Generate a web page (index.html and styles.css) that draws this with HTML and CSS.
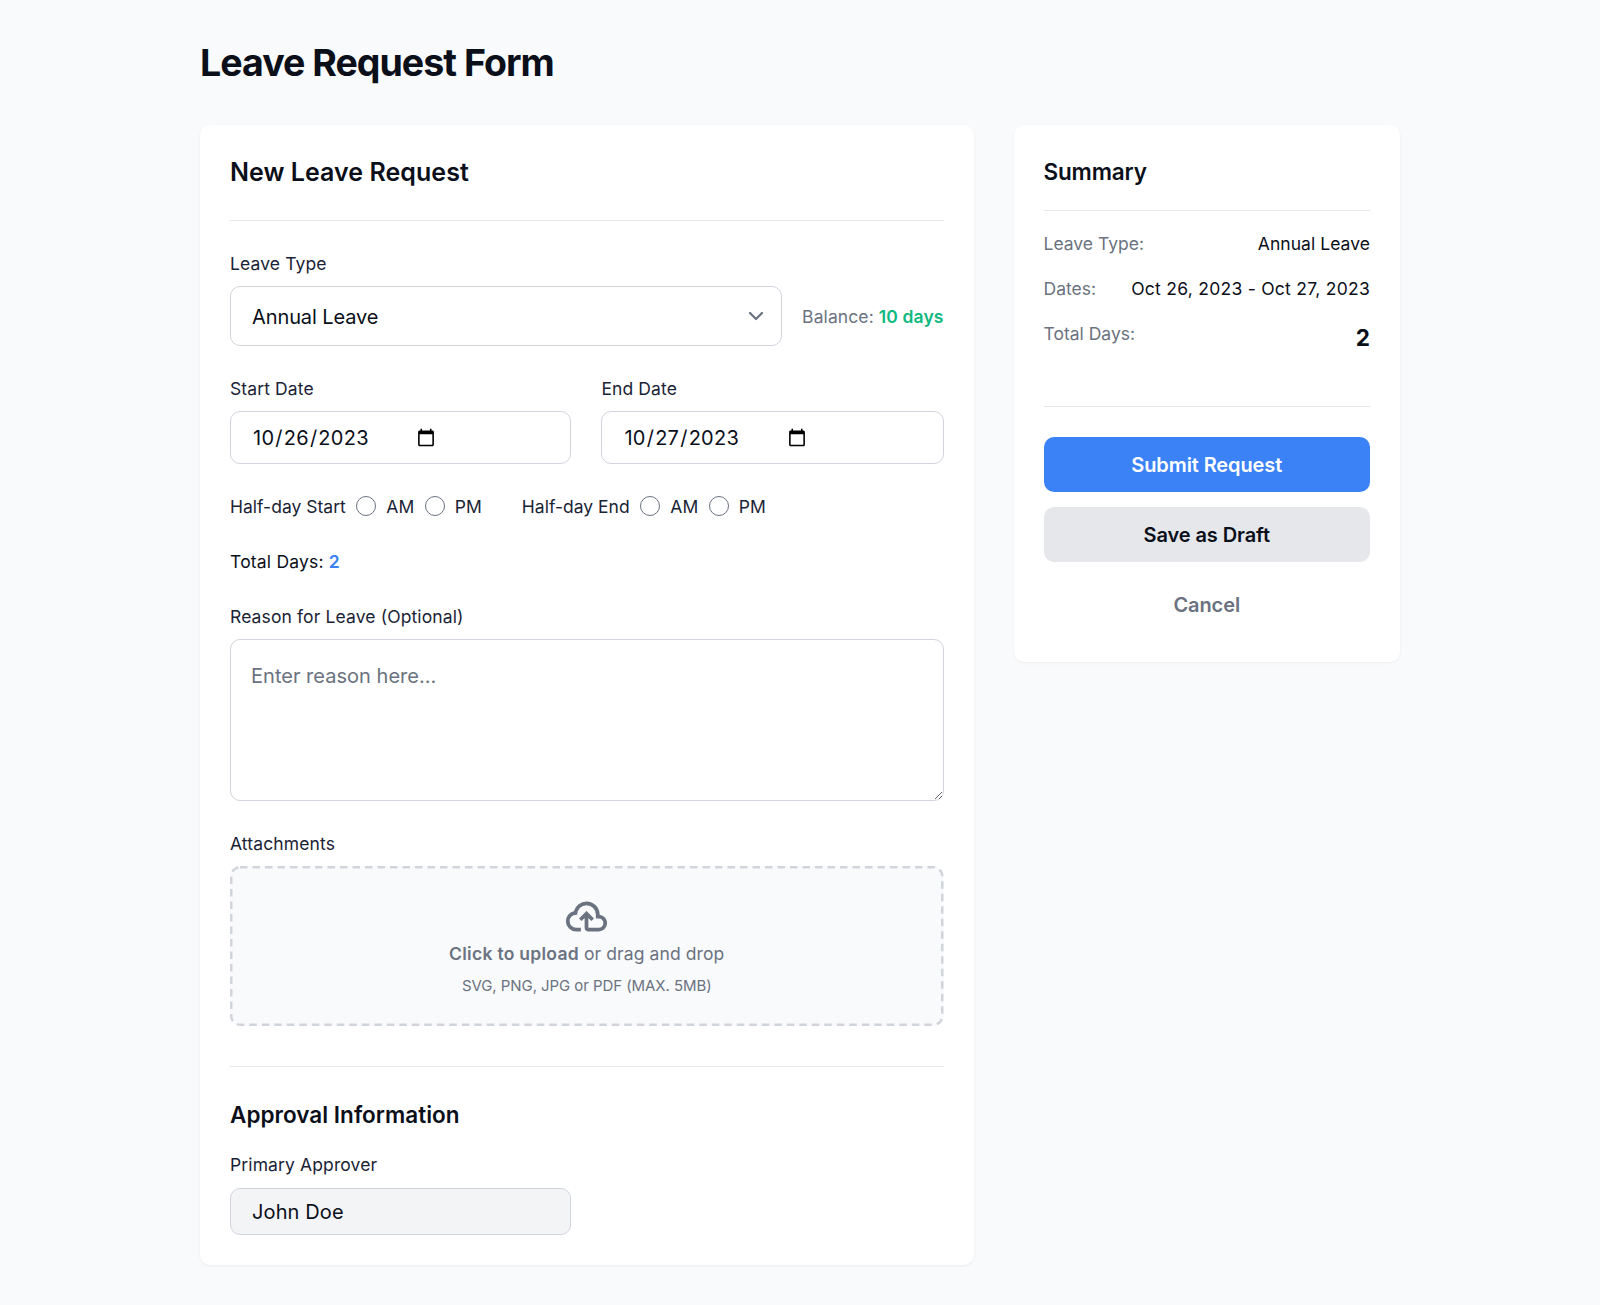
FILE: index.html
```html
<!DOCTYPE html>
<html lang="en">
<head>
<meta charset="utf-8">
<title>Leave Request Form</title>
<link rel="stylesheet" href="styles.css">
</head>
<body>
<div class="page">
  <h1 class="page-title">Leave Request Form</h1>
  <div class="layout">
    <form class="card request">
      <h2 class="request-title">New Leave Request</h2>
      <div class="field">
        <label class="label" for="type">Leave Type</label>
        <div class="type-row">
          <div class="select" id="type">
            <span>Annual Leave</span>
            <svg class="chevron" viewBox="0 0 20 20" fill="none"><path d="M6 8l4 4 4-4" stroke="currentColor" stroke-width="1.5" stroke-linecap="round" stroke-linejoin="round"/></svg>
          </div>
          <span class="balance">Balance: <b class="green">10 days</b></span>
        </div>
      </div>
      <div class="dates">
        <div>
          <label class="label" for="start">Start Date</label>
          <input class="control date" id="start" type="date" value="2023-10-26">
        </div>
        <div>
          <label class="label" for="end">End Date</label>
          <input class="control date" id="end" type="date" value="2023-10-27">
        </div>
      </div>
      <div class="halfdays">
        <div class="halfday"><span>Half-day Start</span><input class="radio" type="radio" name="hs"><span>AM</span><input class="radio" type="radio" name="hs"><span>PM</span></div>
        <div class="halfday"><span>Half-day End</span><input class="radio" type="radio" name="he"><span>AM</span><input class="radio" type="radio" name="he"><span>PM</span></div>
      </div>
      <p class="total">Total Days: <b class="blue">2</b></p>
      <div class="field">
        <label class="label" for="reason">Reason for Leave (Optional)</label>
        <textarea class="control reason" id="reason" placeholder="Enter reason here..."></textarea>
      </div>
      <div class="attachments">
        <span class="label">Attachments</span>
        <div class="dropzone">
          <svg class="dashes"><rect class="dash-line" x="1.25" y="1.25" rx="8.75"/></svg>
          <svg class="cloud" viewBox="0 -960 960 960" fill="currentColor"><path d="M260-160q-91 0-155.500-63T40-377q0-78 47-139t123-78q25-92 100-149t170-57q117 0 198.500 81.500T760-520q69 8 114.500 59.500T920-340q0 75-52.500 127.500T740-160H520q-33 0-56.500-23.500T440-240v-206l-64 62-56-56 160-160 160 160-56 56-64-62v206h220q42 0 71-29t29-71q0-42-29-71t-71-29h-60v-80q0-83-58.500-141.500T480-720q-83 0-141.500 58.500T280-520h-20q-58 0-99 41t-41 99q0 58 41 99t99 41h100v80H260Z"/></svg>
          <p class="drop-main"><b>Click to upload</b> or drag and drop</p>
          <p class="drop-note">SVG, PNG, JPG or PDF (MAX. 5MB)</p>
        </div>
      </div>
      <section class="approval">
        <h3 class="section-title">Approval Information</h3>
        <label class="label" for="approver">Primary Approver</label>
        <input class="control approver" id="approver" type="text" value="John Doe" readonly>
      </section>
    </form>
    <aside class="card summary">
      <h3 class="summary-title">Summary</h3>
      <dl class="rows">
        <div class="row"><dt>Leave Type:</dt><dd>Annual Leave</dd></div>
        <div class="row"><dt>Dates:</dt><dd class="range">Oct 26, 2023 - Oct 27, 2023</dd></div>
        <div class="row"><dt>Total Days:</dt><dd class="big">2</dd></div>
      </dl>
      <div class="actions">
        <button class="button primary" type="button">Submit Request</button>
        <button class="button secondary" type="button">Save as Draft</button>
        <button class="button plain" type="button">Cancel</button>
      </div>
    </aside>
  </div>
</div>
</body>
</html>
```
FILE: styles.css
```css
* { box-sizing: border-box; margin: 0; }
body {
  background: #f9fafc;
  color: #0b0f1a;
  font-family: Inter, "Liberation Sans", sans-serif;
  font-size: 17.5px;
  line-height: 25px;
  letter-spacing: 0.12px;
}
input, textarea, button { font: inherit; color: inherit; letter-spacing: inherit; }
.page { width: 1200px; margin: 0 auto; padding: 38px 0 40px; }
.page-title { font-size: 37.5px; line-height: 50px; font-weight: 700; letter-spacing: -0.97px; margin-bottom: 37px; }
.layout { display: grid; grid-template-columns: 773.5px 386.5px; gap: 40px; align-items: start; }
.card { background: #fff; border-radius: 10px; padding: 30px; box-shadow: 0 1px 3px rgba(0, 0, 0, 0.06); }
.request-title { font-size: 25px; line-height: 35px; font-weight: 600; letter-spacing: 0.04px; padding-bottom: 30px; border-bottom: 1px solid #e5e7eb; margin-bottom: 30px; }
.label { display: block; color: #1a2335; margin-bottom: 10px; }
.type-row { display: flex; align-items: center; gap: 20px; }
.select {
  flex: 1; height: 60px; display: flex; align-items: center; justify-content: space-between;
  padding: 0 10px 0 21px; border: 1px solid #d1d5db; border-radius: 10px; font-size: 20px; letter-spacing: -0.1px;
}
.select span { padding-top: 2px; }
.chevron { width: 30px; height: 30px; color: #6b7280; }
.balance { color: #6b7280; white-space: nowrap; letter-spacing: 0.1px; }
b { font-weight: 600; }
.green { color: #10b981; }
.blue { color: #3b82f6; }
.dates { display: grid; grid-template-columns: 341.4px 1fr; gap: 30px; margin-top: 30px; }
.control { display: block; width: 100%; background: #fff; border: 1px solid #d1d5db; border-radius: 10px; padding: 0 21px; font-size: 20px; outline: none; }
.date { height: 52.5px; padding-top: 2px; letter-spacing: 0.26px; }
.date::-webkit-datetime-edit { flex: none; }
.date::-webkit-calendar-picker-indicator { margin-left: 7px; }
.halfdays { display: flex; gap: 40px; margin-top: 30px; color: #1a2335; letter-spacing: 0.01px; }
.halfday { display: flex; align-items: center; gap: 10.3px; }
.radio { appearance: none; width: 20px; height: 20px; border: 1px solid #6b7280; border-radius: 50%; background: #fff; }
.total { margin: 30px 0; letter-spacing: 0.2px; }
.reason { height: 162px; padding: 21px 20px; line-height: 30px; resize: vertical; letter-spacing: 0.02px; }
.reason::placeholder { color: #6b7280; }
.attachments { margin-top: 30px; }
.dropzone {
  position: relative;
  height: 160px; border-radius: 10px; background: #f9fafc; color: #6b7280;
  display: flex; flex-direction: column; align-items: center; padding-top: 28px;
}
.dashes { position: absolute; inset: 0; width: 100%; height: 100%; }
.dash-line { width: calc(100% - 2.5px); height: calc(100% - 2.5px); fill: none; stroke: #d1d5db; stroke-width: 2.5px; stroke-dasharray: 7.5px 5px; }
.cloud { width: 45px; height: 45px; }
.drop-main { margin-top: 2px; letter-spacing: 0.1px; }
.drop-main b { letter-spacing: 0.28px; }
.drop-note { font-size: 15px; line-height: 20px; margin-top: 10px; letter-spacing: -0.07px; }
.approval { margin-top: 40px; padding-top: 30px; border-top: 1px solid #e5e7eb; }
.section-title, .summary-title { font-size: 22.5px; line-height: 35px; font-weight: 600; letter-spacing: 0.02px; }
.section-title { margin-bottom: 20px; }
.approver { width: 341px; height: 47.5px; margin-top: 11px; padding-top: 2px; background: #f3f4f6; }
.summary-title { line-height: 33px; padding-bottom: 22px; border-bottom: 1px solid #e5e7eb; letter-spacing: -0.15px; }
.rows { display: flex; flex-direction: column; gap: 20px; padding: 20px 0 50px; border-bottom: 1px solid #e5e7eb; }
.row { display: flex; justify-content: space-between; letter-spacing: 0.05px; }
.row dt { color: #6b7280; letter-spacing: 0; }
.row .range { letter-spacing: 0.27px; }
.row .big { font-size: 22.5px; line-height: 33px; padding-bottom: 2px; font-weight: 700; }
.actions { display: flex; flex-direction: column; gap: 15px; padding-top: 30.4px; }
.button { height: 55px; border: 0; border-radius: 10px; padding-top: 2px; font-size: 20px; font-weight: 600; letter-spacing: -0.1px; }
.primary { background: #3b82f6; color: #fff; }
.secondary { background: #e5e7eb; }
.plain { background: none; color: #6b7280; }
```
